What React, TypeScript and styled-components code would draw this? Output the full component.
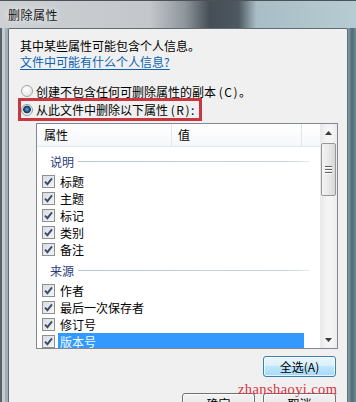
import React from 'react'
import styled, { createGlobalStyle } from 'styled-components'

const GlobalStyle = createGlobalStyle`
  html, body {
    margin: 0;
    padding: 0;
    background: #fff;
  }
  body {
    font-family: 'Noto Sans CJK SC', 'Noto Sans', sans-serif;
    font-size: 12px;
    color: #000;
  }
`

const Window = styled.div`
  position: relative;
  width: 356px;
  height: 402px;
  overflow: hidden;
  display: flex;
  flex-direction: column;
  background: linear-gradient(
    90deg,
    #5b6166 0 2px,
    #c3ccd2 2px 5px,
    #a3afb7 5px 8px,
    #a3afb7 8px 348px,
    #86a0a9 348px,
    #4f6c76 352px,
    #6d8b95 356px
  );
`

const TitleBar = styled.div`
  flex: none;
  height: 28px;
  display: flex;
  align-items: center;
  padding-left: 8px;
  box-sizing: border-box;
  border-top: 1px solid #4c5258;
  background: linear-gradient(
    90deg,
    #cdd1d4 0%,
    #c3c7cb 42%,
    #8e959b 52%,
    #454d55 59%,
    #4e5860 67%,
    #a8bdc5 72%,
    #b7cbd2 100%
  );
  color: #161616;
  font-size: 12px;
  letter-spacing: 0.5px;
  text-shadow: 0 0 6px rgba(255, 255, 255, 0.9);
`

const Client = styled.div`
  flex: 1;
  margin: 0 8px;
  border: 1px solid #5f6d77;
  border-bottom: none;
  border-radius: 2px 2px 0 0;
  background: #f0f0f0;
  padding: 9px 11px 0 11px;
  display: flex;
  flex-direction: column;
  align-items: flex-start;
  min-height: 0;
`

const Intro = styled.div`
  line-height: 16px;
  white-space: nowrap;
`

const HelpLink = styled.a`
  line-height: 16px;
  color: #0b62b0;
  text-decoration: underline;
  text-underline-offset: 2px;
  cursor: pointer;
`

const RadioRow = styled.label<{ $marked?: boolean }>`
  display: flex;
  align-items: center;
  gap: 3px;
  box-sizing: border-box;
  height: ${(p) => (p.$marked ? '25px' : '16px')};
  width: ${(p) => (p.$marked ? '184px' : 'auto')};
  white-space: nowrap;
  margin-top: ${(p) => (p.$marked ? '-1px' : '13px')};
  margin-left: ${(p) => (p.$marked ? '-2px' : '0')};
  padding-left: ${(p) => (p.$marked ? '0' : '1px')};
  border: ${(p) => (p.$marked ? '3px solid #c9363e' : 'none')};
`

const Radio = styled.span<{ $checked?: boolean }>`
  width: 12px;
  height: 12px;
  flex: none;
  box-sizing: border-box;
  border-radius: 50%;
  border: 1px solid ${(p) => (p.$checked ? '#8a9aa8' : '#a5a5a5')};
  background: ${(p) =>
    p.$checked
      ? 'radial-gradient(circle at 50% 45%, #6fb2e0 0, #2a5f8f 2px, #1b3550 3.5px, #e9eef2 4.2px, #f7f7f7 100%)'
      : 'radial-gradient(circle at 40% 35%, #ffffff 0, #ececec 60%, #d6d6d6 100%)'};
`

const Paren = styled.span`
  letter-spacing: 1.5px;
`

const ListView = styled.div`
  margin-top: 2px;
  margin-left: 16px;
  width: 302px;
  height: 226px;
  box-sizing: border-box;
  border: 1px solid #828790;
  background: #fff;
  display: flex;
  overflow: hidden;
  flex: none;
`

const ListMain = styled.div`
  flex: 1;
  display: flex;
  flex-direction: column;
  overflow: hidden;
`

const Header = styled.div`
  flex: none;
  height: 22px;
  display: flex;
  border-bottom: 1px solid #e3e6ea;
  background: linear-gradient(#ffffff, #f6f7f9);
`

const HeaderCell = styled.div<{ $width: number; $pad: number }>`
  width: ${(p) => p.$width}px;
  box-sizing: border-box;
  padding-left: ${(p) => p.$pad}px;
  line-height: 22px;
  border-right: 1px solid #e2e5ea;
`

const ListBody = styled.div`
  flex: 1;
  padding-top: 2px;
  overflow: hidden;
`

const GroupHeader = styled.div`
  margin-top: 4px;
  height: 17px;
  display: flex;
  align-items: center;
  gap: 4px;
  padding-left: 13px;
  padding-right: 11px;
  color: #2a3c7a;

  &::after {
    content: '';
    flex: 1;
    height: 1px;
    background: linear-gradient(90deg, #b3c6d4, #c6d6e1 90%, #e4ecf1);
  }
`

const Items = styled.div`
  padding-top: 3px;
`

const ItemRow = styled.div`
  height: 17px;
  display: flex;
  align-items: center;
  padding-left: 5px;
`

const CheckBox = styled.span`
  width: 13px;
  height: 13px;
  box-sizing: border-box;
  border: 1px solid #8e8f8f;
  background: linear-gradient(135deg, #d9dde2, #f3f4f6);
  display: flex;
  align-items: center;
  justify-content: center;
  flex: none;
`

const ItemLabel = styled.span<{ $selected?: boolean }>`
  margin-left: 3px;
  padding-left: 2px;
  height: 17px;
  line-height: 17px;
  width: ${(p) => (p.$selected ? '244px' : 'auto')};
  background: ${(p) => (p.$selected ? '#3399ff' : 'transparent')};
  color: ${(p) => (p.$selected ? '#f2fbff' : '#000')};
`

const ScrollBar = styled.div`
  width: 17px;
  flex: none;
  display: flex;
  flex-direction: column;
  background: linear-gradient(90deg, #e8e8e8, #f4f4f4 40%, #f4f4f4 70%, #ebebeb);
`

const ScrollArrow = styled.div`
  height: 17px;
  display: flex;
  align-items: center;
  justify-content: center;
  flex: none;
`

const Thumb = styled.div`
  margin: 2px 1px 0 1px;
  height: 53px;
  box-sizing: border-box;
  border: 1px solid #979797;
  border-radius: 2px;
  background: linear-gradient(90deg, #f4f4f4, #e8e8e8 50%, #d8d8d8);
  display: flex;
  flex-direction: column;
  align-items: center;
  justify-content: center;
  gap: 2px;
  flex: none;
`

const Grip = styled.span`
  width: 7px;
  height: 1px;
  background: #5f5f5f;
  box-shadow: 0 1px 0 #fff;
`

const TrackFill = styled.div`
  flex: 1;
`

const ButtonRow = styled.div<{ $gap: number }>`
  align-self: stretch;
  display: flex;
  justify-content: flex-end;
  gap: 8px;
  margin-top: ${(p) => p.$gap}px;
  flex: none;
`

const Button = styled.button<{ $primary?: boolean }>`
  width: 73px;
  height: 21px;
  padding: 0;
  box-sizing: border-box;
  border-radius: 3px;
  font-family: inherit;
  font-size: 12px;
  color: #000;
  border: 1px solid ${(p) => (p.$primary ? '#3c7fb1' : '#707070')};
  background: ${(p) =>
    p.$primary
      ? 'linear-gradient(#eaf6fd 0%, #d9f0fc 45%, #bee6fd 50%, #a7d9f5 100%)'
      : 'linear-gradient(#f2f2f2 0%, #ebebeb 45%, #dddddd 50%, #cfcfcf 100%)'};
  box-shadow: inset 0 0 0 1px rgba(255, 255, 255, 0.7);
`

const Watermark = styled.div`
  position: absolute;
  left: 238px;
  top: 380px;
  font-family: 'Liberation Serif', 'DejaVu Serif', serif;
  font-size: 14.5px;
  letter-spacing: 0.4px;
  line-height: 18px;
  color: #d8303f;
  white-space: nowrap;
`

const Check = () => (
  <svg width="11" height="11" viewBox="0 0 11 11">
    <path d="M2 5.6 L4.4 8.2 L9 2.4" fill="none" stroke="#3b4d6b" strokeWidth="1.9" />
  </svg>
)

const Arrow = ({ down }: { down?: boolean }) => (
  <svg width="7" height="4" viewBox="0 0 7 4">
    <path d={down ? 'M0 0 H7 L3.5 4 Z' : 'M0 4 H7 L3.5 0 Z'} fill="#3a3a3a" />
  </svg>
)

const groups = [
  { title: '说明', items: ['标题', '主题', '标记', '类别', '备注'] },
  { title: '来源', items: ['作者', '最后一次保存者', '修订号', '版本号'] },
]

export default function App() {
  return (
    <>
      <GlobalStyle />
      <Window>
        <TitleBar>删除属性</TitleBar>
        <Client>
          <Intro>其中某些属性可能包含个人信息。</Intro>
          <HelpLink>文件中可能有什么个人信息?</HelpLink>
          <RadioRow>
            <Radio />
            <span>
              创建不包含任何可删除属性的副本 <Paren>(C)</Paren>。
            </span>
          </RadioRow>
          <RadioRow $marked>
            <Radio $checked />
            <span>
              从此文件中删除以下属性 <Paren>(R)</Paren>:
            </span>
          </RadioRow>
          <ListView>
            <ListMain>
              <Header>
                <HeaderCell $width={135} $pad={7}>属性</HeaderCell>
                <HeaderCell $width={130} $pad={6}>值</HeaderCell>
              </Header>
              <ListBody>
                {groups.map((g) => (
                  <div key={g.title}>
                    <GroupHeader>{g.title}</GroupHeader>
                    <Items>
                      {g.items.map((it) => (
                        <ItemRow key={it}>
                          <CheckBox>
                            <Check />
                          </CheckBox>
                          <ItemLabel $selected={it === '版本号'}>{it}</ItemLabel>
                        </ItemRow>
                      ))}
                    </Items>
                  </div>
                ))}
              </ListBody>
            </ListMain>
            <ScrollBar>
              <ScrollArrow>
                <Arrow />
              </ScrollArrow>
              <Thumb>
                <Grip />
                <Grip />
                <Grip />
              </Thumb>
              <TrackFill />
              <ScrollArrow>
                <Arrow down />
              </ScrollArrow>
            </ScrollBar>
          </ListView>
          <ButtonRow $gap={7}>
            <Button $primary>全选(A)</Button>
          </ButtonRow>
          <ButtonRow $gap={16}>
            <Button>确定</Button>
            <Button>取消</Button>
          </ButtonRow>
        </Client>
        <Watermark>zhanshaoyi.com</Watermark>
      </Window>
    </>
  )
}
